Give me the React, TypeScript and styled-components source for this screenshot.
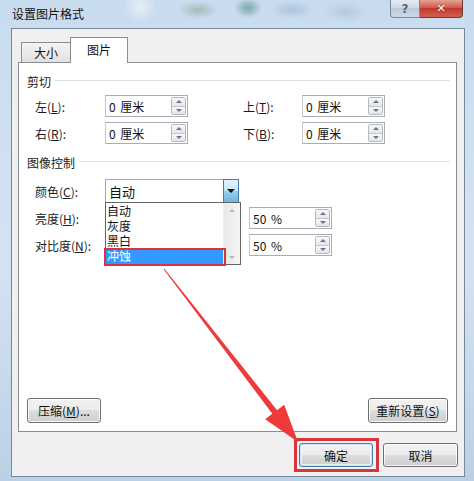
import React from 'react';
import styled, { createGlobalStyle } from 'styled-components';

const GlobalStyle = createGlobalStyle`
  html, body {
    margin: 0;
    padding: 0;
  }
  body {
    width: 474px;
    height: 481px;
    overflow: hidden;
    font-family: 'Noto Sans CJK SC', 'Microsoft YaHei', sans-serif;
    font-size: 12px;
    color: #1a1a1a;
  }
  * { box-sizing: border-box; }
`;

const Window = styled.div`
  position: relative;
  width: 474px;
  height: 481px;
  display: flex;
  flex-direction: column;
  background: linear-gradient(#c9dcef, #d4e3f2 55%, #bcd0e5);
`;

const TitleBar = styled.div`
  height: 28px;
  display: flex;
  align-items: flex-start;
  padding-left: 12px;
  padding-right: 11px;
  background-image:
    radial-gradient(circle at 140px 6px, rgba(255,255,255,0.55) 0, rgba(255,255,255,0) 16px),
    radial-gradient(ellipse 20px 9px at 198px 10px, rgba(140,160,140,0.55), rgba(140,160,140,0)),
    radial-gradient(ellipse 14px 10px at 248px 8px, rgba(70,130,125,0.6), rgba(70,130,125,0)),
    radial-gradient(ellipse 22px 9px at 292px 10px, rgba(150,175,205,0.5), rgba(150,175,205,0)),
    radial-gradient(ellipse 22px 10px at 345px 12px, rgba(160,180,205,0.5), rgba(160,180,205,0));
`;

const Title = styled.div`
  flex: 1;
  line-height: 28px;
  font-size: 12px;
  color: #111;
`;

const CaptionButton = styled.div<{ $close?: boolean }>`
  height: 18px;
  width: ${p => (p.$close ? '43px' : '30px')};
  display: flex;
  align-items: center;
  justify-content: center;
  border: 1px solid ${p => (p.$close ? '#6e3a36' : '#7a8898')};
  border-top: none;
  border-left: ${p => (p.$close ? 'none' : '1px solid #7a8898')};
  border-radius: ${p => (p.$close ? '0 0 4px 0' : '0 0 0 4px')};
  background: ${p =>
    p.$close
      ? 'linear-gradient(#e4a395, #cf5a4c 45%, #c2392f 50%, #d4604f)'
      : 'linear-gradient(#e6ecf2, #cdd8e3 50%, #bccad8 50%, #cfd9e4)'};
  color: ${p => (p.$close ? '#fff' : '#5a6878')};
  font-family: 'DejaVu Sans', sans-serif;
  font-weight: bold;
  font-size: ${p => (p.$close ? '11px' : '12px')};
  text-shadow: ${p => (p.$close ? '0 0 2px #7a2018' : 'none')};
`;

const Client = styled.div`
  height: 449px;
  margin: 0 9px 0 11px;
  border: 1px solid #76889a;
  background: #f0f0f0;
  padding: 8px 7px 0 6px;
  display: flex;
  flex-direction: column;
`;

const TabRow = styled.div`
  display: flex;
  align-items: flex-end;
  padding-left: 3px;
  margin-bottom: -1px;
  position: relative;
  z-index: 1;
`;

const Tab = styled.div<{ $active?: boolean }>`
  height: ${p => (p.$active ? '26px' : '20px')};
  width: ${p => (p.$active ? '58px' : '50px')};
  margin-bottom: ${p => (p.$active ? '0' : '1px')};
  margin-left: ${p => (p.$active ? '-1px' : '0')};
  border: 1px solid #898c95;
  border-bottom: none;
  background: ${p => (p.$active ? '#fff' : 'linear-gradient(#f3f3f3, #e2e2e2)')};
  display: flex;
  align-items: center;
  justify-content: center;
  padding-bottom: ${p => (p.$active ? '3px' : '0')};
  font-size: 12px;
  color: #111;
`;

const Panel = styled.div`
  height: 370px;
  background: #fff;
  border: 1px solid #898c95;
  padding: 10px 6px 8px 8px;
  display: flex;
  flex-direction: column;
`;

const SectionHeader = styled.div<{ $mt?: number }>`
  display: flex;
  align-items: center;
  gap: 4px;
  height: 16px;
  margin-top: ${p => p.$mt ?? 0}px;
  color: #1a1a1a;

  &::after {
    content: '';
    flex: 1;
    height: 1px;
    background: #dde1e6;
    margin-top: -2px;
  }
`;

const Row = styled.div<{ $mt: number }>`
  display: flex;
  align-items: center;
  margin-top: ${p => p.$mt}px;
  padding-left: 8px;
`;

const Label = styled.div<{ $w: number }>`
  width: ${p => p.$w}px;
  flex-shrink: 0;
  color: #1a1a1a;
`;

const Gap = styled.div<{ $w: number }>`
  width: ${p => p.$w}px;
  flex-shrink: 0;
`;

const SpinBox = styled.div`
  width: 83px;
  height: 22px;
  border: 1px solid #abadb3;
  border-left-color: #c4c7cc;
  background: #fff;
  display: flex;
  align-items: center;
  padding: 0 1px 0 3px;
`;

const SpinValue = styled.div`
  flex: 1;
  font-size: 12px;
  color: #111;
  word-spacing: 2px;
`;

const Spinner = styled.div`
  width: 15px;
  height: 18px;
  display: flex;
  flex-direction: column;
  border: 1px solid #b4b9c1;
  border-radius: 2px;
  overflow: hidden;
`;

const SpinHalf = styled.div<{ $down?: boolean }>`
  flex: 1;
  display: flex;
  align-items: center;
  justify-content: center;
  background: linear-gradient(#f7f8fa, #e3e6ea);
  border-top: ${p => (p.$down ? '1px solid #c3c7cd' : 'none')};

  &::after {
    content: '';
    border-left: 3px solid transparent;
    border-right: 3px solid transparent;
    ${p => (p.$down ? 'border-top: 3px solid #6d7580;' : 'border-bottom: 3px solid #6d7580;')}
  }
`;

const Combo = styled.div`
  position: relative;
  width: 134px;
  height: 24px;
  border: 1px solid #a4a7ad;
  background: #fff;
  display: flex;
  align-items: stretch;
`;

const ComboText = styled.div`
  flex: 1;
  display: flex;
  align-items: center;
  padding-left: 3px;
  font-size: 13px;
  color: #111;
`;

const ComboButton = styled.div`
  width: 16px;
  display: flex;
  align-items: center;
  justify-content: center;
  border: 1px solid #3c7fb1;
  margin: -1px -1px -1px 0;
  background: linear-gradient(#e5f4fc, #c4e5f6 50%, #98d1ef 50%, #6cb6de);

  &::after {
    content: '';
    border-left: 4px solid transparent;
    border-right: 4px solid transparent;
    border-top: 4px solid #111;
  }
`;

const DropList = styled.div`
  position: absolute;
  top: 22px;
  left: -1px;
  width: 136px;
  height: 63px;
  border: 1px solid #646464;
  background: #fff;
  display: flex;
  z-index: 2;
`;

const Items = styled.div`
  flex: 1;
  display: flex;
  flex-direction: column;
`;

const Item = styled.div<{ $selected?: boolean }>`
  position: relative;
  height: ${p => (p.$selected ? '16px' : '15px')};
  line-height: ${p => (p.$selected ? '16px' : '15px')};
  padding-left: 1px;
  font-size: 12px;
  background: ${p => (p.$selected ? '#3399ff' : 'transparent')};
  color: ${p => (p.$selected ? '#fff' : '#111')};

  ${p =>
    p.$selected &&
    `&::after {
      content: '';
      position: absolute;
      inset: 0 -3px -2px -2px;
      border: 2px solid #d7343d;
    }`}
`;

const ScrollBar = styled.div`
  width: 17px;
  display: flex;
  flex-direction: column;
  justify-content: space-between;
  align-items: center;
  padding: 6px 0 5px;
  background: linear-gradient(90deg, #e8e8e8, #f4f4f4);
  border-left: 1px solid #ececec;
`;

const ScrollArrow = styled.div<{ $down?: boolean }>`
  border-left: 3px solid transparent;
  border-right: 3px solid transparent;
  ${p => (p.$down ? 'border-top: 3px solid #b7b7b7;' : 'border-bottom: 3px solid #b7b7b7;')}
`;

const PanelButtons = styled.div`
  margin-top: auto;
  margin-right: 2px;
  display: flex;
  justify-content: space-between;
`;

const Button = styled.div<{ $w: number; $h: number; $default?: boolean }>`
  position: relative;
  width: ${p => p.$w}px;
  height: ${p => p.$h}px;
  display: flex;
  align-items: center;
  justify-content: center;
  border: 1px solid ${p => (p.$default ? '#3c7fb1' : '#707070')};
  border-radius: 3px;
  background: linear-gradient(#f2f2f2, #ebebeb 50%, #dddddd 50%, #cfcfcf);
  box-shadow: ${p =>
    p.$default
      ? 'inset 0 0 0 1px #c8e6f8, inset 0 0 0 2px rgba(255,255,255,0.6)'
      : 'inset 0 0 0 1px rgba(255,255,255,0.8)'};
  font-size: 12px;
  color: #111;

  ${p =>
    p.$default &&
    `&::after {
      content: '';
      position: absolute;
      inset: -6px -7px -6px -6px;
      border: 3px solid #d7343d;
    }`}
`;

const Footer = styled.div`
  display: flex;
  justify-content: flex-end;
  gap: 10px;
  padding-top: 11px;
  margin-right: -1px;
`;

const Overlay = styled.svg`
  position: absolute;
  left: 0;
  top: 0;
  pointer-events: none;
  z-index: 5;
`;

function Spin({ value }: { value: string }) {
  return (
    <SpinBox>
      <SpinValue>{value}</SpinValue>
      <Spinner>
        <SpinHalf />
        <SpinHalf $down />
      </Spinner>
    </SpinBox>
  );
}

export default function App() {
  return (
    <Window>
      <GlobalStyle />
      <TitleBar>
        <Title>设置图片格式</Title>
        <CaptionButton>?</CaptionButton>
        <CaptionButton $close>✕</CaptionButton>
      </TitleBar>
      <Client>
        <TabRow>
          <Tab>大小</Tab>
          <Tab $active>图片</Tab>
        </TabRow>
        <Panel>
          <SectionHeader>剪切</SectionHeader>
          <Row $mt={6}>
            <Label $w={70}>左(<u>L</u>):</Label>
            <Spin value="0 厘米" />
            <Gap $w={55} />
            <Label $w={59}>上(<u>T</u>):</Label>
            <Spin value="0 厘米" />
          </Row>
          <Row $mt={5}>
            <Label $w={70}>右(<u>R</u>):</Label>
            <Spin value="0 厘米" />
            <Gap $w={55} />
            <Label $w={59}>下(<u>B</u>):</Label>
            <Spin value="0 厘米" />
          </Row>

          <SectionHeader $mt={10}>图像控制</SectionHeader>
          <Row $mt={9}>
            <Label $w={70}>颜色(<u>C</u>):</Label>
            <Combo>
              <ComboText>自动</ComboText>
              <ComboButton />
              <DropList>
                <Items>
                  <Item>自动</Item>
                  <Item>灰度</Item>
                  <Item>黑白</Item>
                  <Item $selected>冲蚀</Item>
                </Items>
                <ScrollBar>
                  <ScrollArrow />
                  <ScrollArrow $down />
                </ScrollBar>
              </DropList>
            </Combo>
          </Row>
          <Row $mt={4}>
            <Label $w={70}>亮度(<u>H</u>):</Label>
            <Gap $w={144} />
            <Spin value="50 %" />
          </Row>
          <Row $mt={5}>
            <Label $w={70}>对比度(<u>N</u>):</Label>
            <Gap $w={144} />
            <Spin value="50 %" />
          </Row>

          <PanelButtons>
            <Button $w={74} $h={25}>
              压缩(<u>M</u>)...
            </Button>
            <Button $w={80} $h={25}>
              重新设置(<u>S</u>)
            </Button>
          </PanelButtons>
        </Panel>
        <Footer>
          <Button $w={74} $h={24} $default>
            确定
          </Button>
          <Button $w={75} $h={24}>
            取消
          </Button>
        </Footer>
      </Client>

      <Overlay width="474" height="481" viewBox="0 0 474 481">
        <polygon
          fill="#ee3a3a"
          points="164.4,268.7 277.1,410.2 284.2,404.7 298,442 265.2,419.3 272.3,413.8 163.6,269.3"
        />
      </Overlay>
    </Window>
  );
}
